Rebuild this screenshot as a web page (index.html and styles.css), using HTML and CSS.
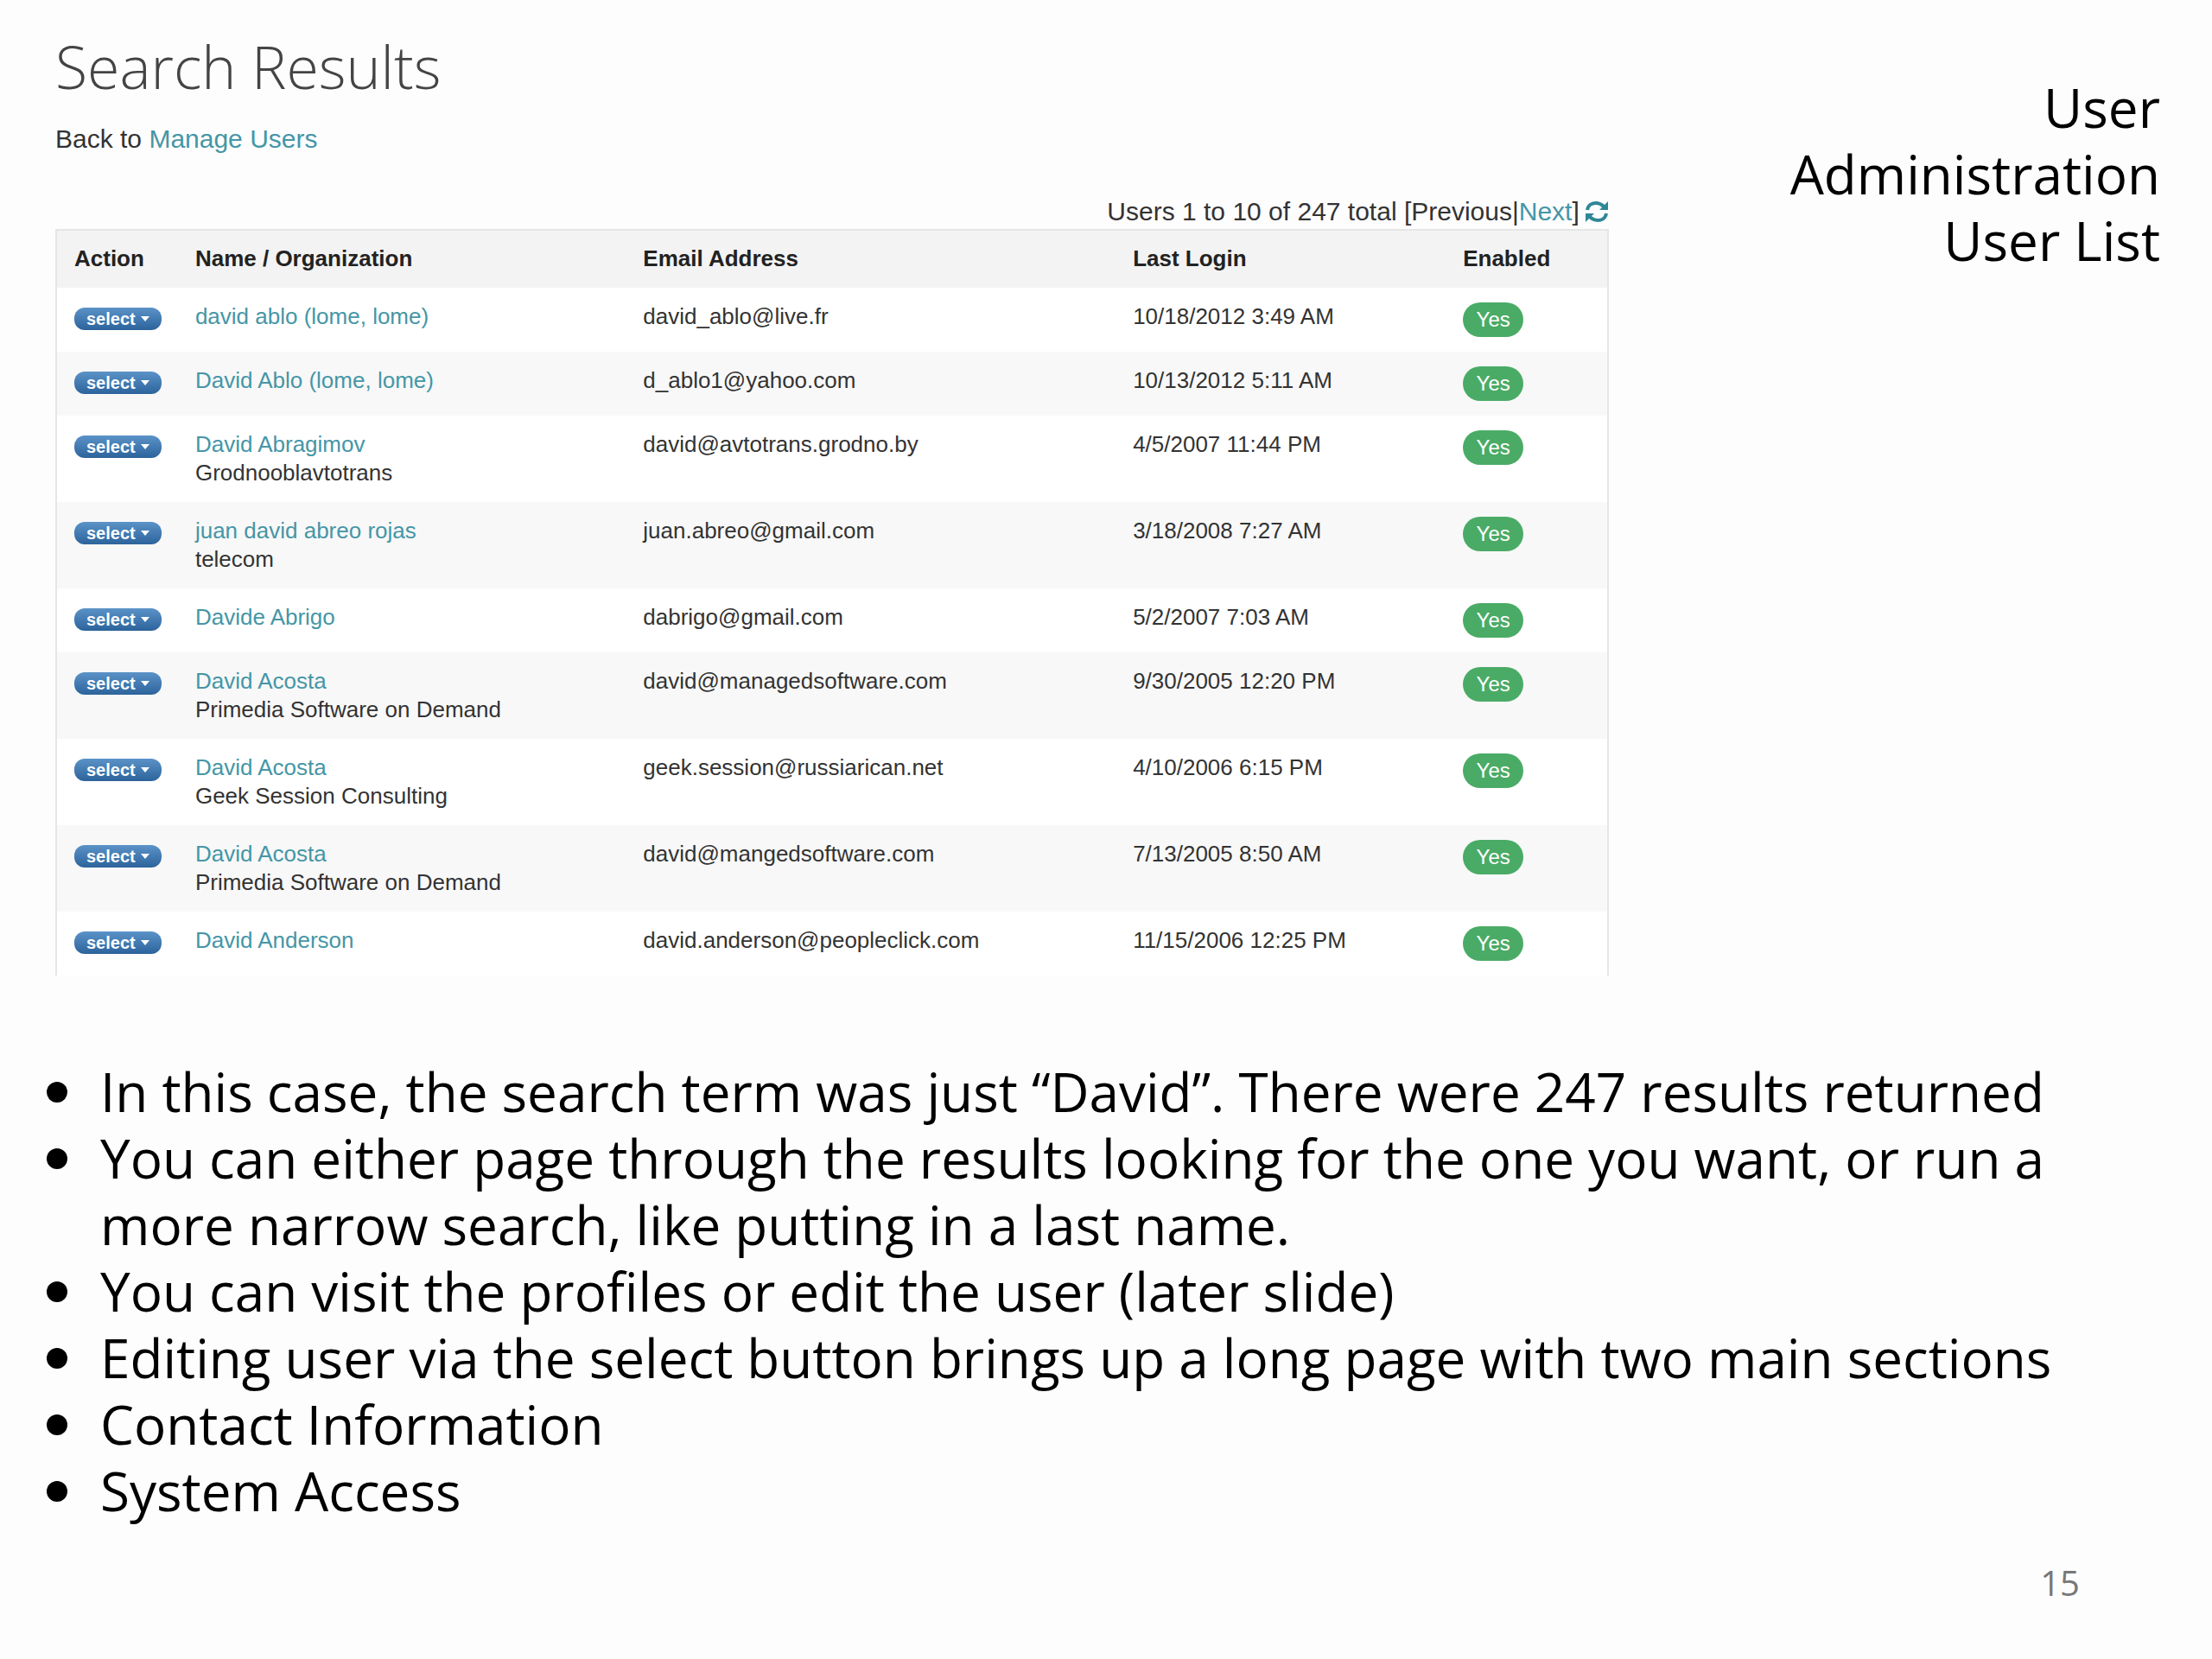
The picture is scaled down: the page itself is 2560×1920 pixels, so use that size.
FILE: index.html
```html
<!DOCTYPE html>
<html lang="en">
<head>
  <meta charset="UTF-8">
  <title>User Administration - User List</title>
  <link rel="stylesheet" href="styles.css">
</head>
<body>

  <div class="top">
    <section class="results">
      <h1>Search Results</h1>
      <p class="back">Back to <a href="#">Manage Users</a></p>

      <div class="pager">
        <span>Users 1 to 10 of 247 total [Previous|<a href="#">Next</a>]</span>
        <a href="#" class="refresh" aria-label="Refresh">
          <svg viewBox="0 0 28 26" width="28" height="26">
            <path d="M3 11 C4 5 9 3 13 3 C17 3 20 5 22 7" fill="none" stroke="currentColor" stroke-width="4"/>
            <path d="M27 1 V11 H17 Z" fill="currentColor"/>
            <path d="M25 15 C24 21 19 23 15 23 C11 23 8 21 6 19" fill="none" stroke="currentColor" stroke-width="4"/>
            <path d="M1 25 V15 H11 Z" fill="currentColor"/>
          </svg>
        </a>
      </div>

      <table>
        <thead>
          <tr>
            <th class="col-action">Action</th>
            <th class="col-name">Name / Organization</th>
            <th class="col-email">Email Address</th>
            <th class="col-login">Last Login</th>
            <th>Enabled</th>
          </tr>
        </thead>
        <tbody>
          <tr>
            <td><button class="select-btn">select</button></td>
            <td><a href="#">david ablo (lome, lome)</a></td>
            <td>david_ablo@live.fr</td>
            <td>10/18/2012 3:49 AM</td>
            <td><span class="badge">Yes</span></td>
          </tr>
          <tr>
            <td><button class="select-btn">select</button></td>
            <td><a href="#">David Ablo (lome, lome)</a></td>
            <td>d_ablo1@yahoo.com</td>
            <td>10/13/2012 5:11 AM</td>
            <td><span class="badge">Yes</span></td>
          </tr>
          <tr>
            <td><button class="select-btn">select</button></td>
            <td><a href="#">David Abragimov</a><br>Grodnooblavtotrans</td>
            <td>david@avtotrans.grodno.by</td>
            <td>4/5/2007 11:44 PM</td>
            <td><span class="badge">Yes</span></td>
          </tr>
          <tr>
            <td><button class="select-btn">select</button></td>
            <td><a href="#">juan david abreo rojas</a><br>telecom</td>
            <td>juan.abreo@gmail.com</td>
            <td>3/18/2008 7:27 AM</td>
            <td><span class="badge">Yes</span></td>
          </tr>
          <tr>
            <td><button class="select-btn">select</button></td>
            <td><a href="#">Davide Abrigo</a></td>
            <td>dabrigo@gmail.com</td>
            <td>5/2/2007 7:03 AM</td>
            <td><span class="badge">Yes</span></td>
          </tr>
          <tr>
            <td><button class="select-btn">select</button></td>
            <td><a href="#">David Acosta</a><br>Primedia Software on Demand</td>
            <td>david@managedsoftware.com</td>
            <td>9/30/2005 12:20 PM</td>
            <td><span class="badge">Yes</span></td>
          </tr>
          <tr>
            <td><button class="select-btn">select</button></td>
            <td><a href="#">David Acosta</a><br>Geek Session Consulting</td>
            <td>geek.session@russiarican.net</td>
            <td>4/10/2006 6:15 PM</td>
            <td><span class="badge">Yes</span></td>
          </tr>
          <tr>
            <td><button class="select-btn">select</button></td>
            <td><a href="#">David Acosta</a><br>Primedia Software on Demand</td>
            <td>david@mangedsoftware.com</td>
            <td>7/13/2005 8:50 AM</td>
            <td><span class="badge">Yes</span></td>
          </tr>
          <tr>
            <td><button class="select-btn">select</button></td>
            <td><a href="#">David Anderson</a></td>
            <td>david.anderson@peopleclick.com</td>
            <td>11/15/2006 12:25 PM</td>
            <td><span class="badge">Yes</span></td>
          </tr>
        </tbody>
      </table>
    </section>

    <h2>User<br>Administration<br>User List</h2>
  </div>

  <ul class="notes">
    <li>In this case, the search term was just “David”. There were 247 results returned</li>
    <li>You can either page through the results looking for the one you want, or run a more narrow search, like putting in a last name.</li>
    <li>You can visit the profiles or edit the user (later slide)</li>
    <li>Editing user via the select button brings up a long page with two main sections</li>
    <li>Contact Information</li>
    <li>System Access</li>
  </ul>

  <footer>15</footer>

</body>
</html>
```
FILE: styles.css
```css
* {
  box-sizing: border-box;
}

body {
  margin: 0;
  background-color: #fefdfe;
  color: #000;
  font-family: 'Trebuchet MS', 'Open Sans', sans-serif;
  font-size: 62px;
  line-height: 77px;
}

a {
  color: #4596a6;
  text-decoration: none;
}

.top {
  display: flex;
  justify-content: space-between;
  padding: 38px 60px 0 64px;
}

.results {
  width: 73.8%;
  color: #333;
  font-family: 'Liberation Sans', Arial, sans-serif;
  font-size: 26px;
  line-height: 33px;
}

h1 {
  margin: 0;
  color: #444;
  font-family: 'Open Sans', sans-serif;
  font-size: 68px;
  font-weight: 300;
  line-height: 77px;
}

.back {
  margin: 26px 0 44px;
  font-size: 30px;
  line-height: 40px;
}

.pager {
  display: flex;
  justify-content: flex-end;
  align-items: center;
  gap: 6px;
  font-size: 30px;
  line-height: 40px;
}

.refresh {
  color: #2f8796;
}

.refresh svg {
  display: block;
}

table {
  width: 100%;
  table-layout: fixed;
  border-collapse: separate;
  border-spacing: 0;
  border: 2px solid #e6e6e6;
  border-bottom: none;
  background-color: #fff;
}

th, td {
  padding: 17px 0 17px 20px;
  text-align: left;
  vertical-align: top;
}

th {
  padding-top: 16px;
  background-color: #f3f3f3;
  color: #222;
}

tbody tr:nth-child(even) {
  background-color: #f8f8f8;
}

.col-action {
  width: 7.8%;
}

.col-name {
  width: 28.9%;
}

.col-email {
  width: 31.6%;
}

.col-login {
  width: 21.3%;
}

.select-btn {
  display: flex;
  align-items: center;
  gap: 6px;
  margin-top: 6px;
  padding: 0 14px;
  height: 26px;
  border: none;
  border-radius: 12px;
  background: linear-gradient(#5b93c8, #2c639b);
  color: #fff;
  font-family: inherit;
  font-size: 20px;
  font-weight: bold;
  line-height: 24px;
  cursor: pointer;
}

.select-btn::after {
  content: "";
  border: 5px solid transparent;
  border-top: 6px solid #fff;
  border-bottom: none;
}

.badge {
  display: block;
  width: 70px;
  border-radius: 20px;
  background-color: #4aab66;
  color: #fff;
  font-size: 24px;
  line-height: 40px;
  text-align: center;
}

h2 {
  margin: 48px 0 0;
  font-size: 62px;
  font-weight: normal;
  text-align: right;
}

.notes {
  margin: 96px 120px 0 54px;
  padding: 0;
  list-style: none;
}

.notes li {
  display: flex;
  gap: 38px;
}

.notes li::before {
  content: "";
  flex: none;
  width: 24px;
  height: 24px;
  margin-top: 27px;
  border-radius: 50%;
  background-color: #000;
}

footer {
  margin: 29px 153px 0;
  color: #777;
  font-size: 40px;
  text-align: right;
}
```
